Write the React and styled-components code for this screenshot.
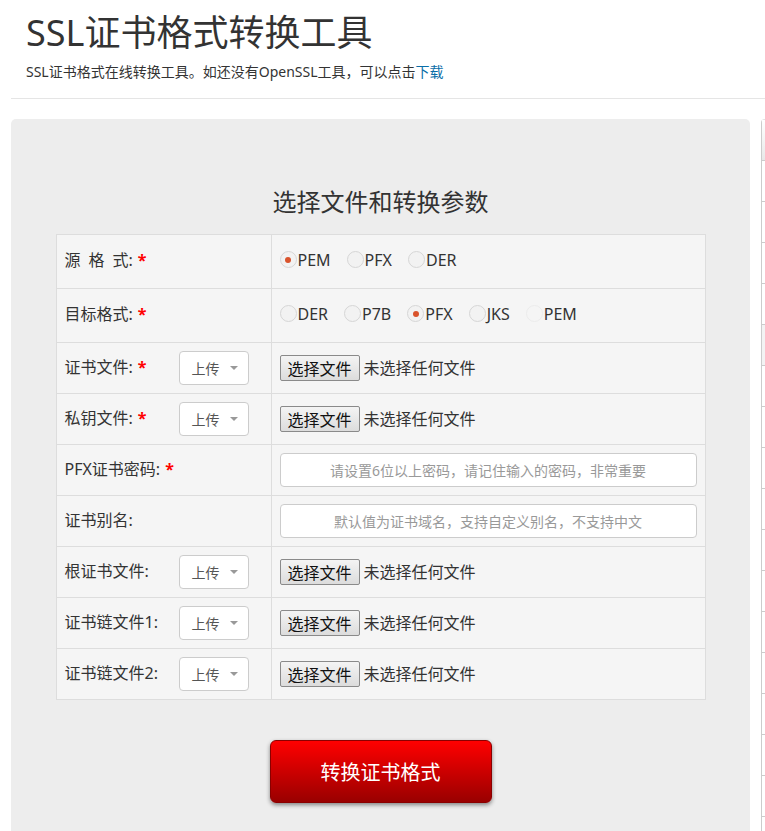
import React from "react";
import styled, { createGlobalStyle } from "styled-components";

const GlobalStyle = createGlobalStyle`
    html, body {
        margin: 0;
        padding: 0;
        background: #ffffff;
        overflow: hidden;
    }
    body {
        font-family: "Noto Sans", "Noto Sans CJK SC", sans-serif;
        color: #333;
    }
`

const rows = [
    { label: "源\u2002格\u2002式:", required: true, kind: "radio", options: ["PEM", "PFX", "DER"], checked: "PEM", tall: true },
    { label: "目标格式:", required: true, kind: "radio", options: ["DER", "P7B", "PFX", "JKS", "PEM"], checked: "PFX", faded: "PEM", tall: true },
    { label: "证书文件:", required: true, kind: "file", upload: true },
    { label: "私钥文件:", required: true, kind: "file", upload: true },
    { label: "PFX证书密码:", required: true, kind: "input", placeholder: "请设置6位以上密码，请记住输入的密码，非常重要" },
    { label: "证书别名:", kind: "input", placeholder: "默认值为证书域名，支持自定义别名，不支持中文" },
    { label: "根证书文件:", kind: "file", upload: true },
    { label: "证书链文件1:", kind: "file", upload: true },
    { label: "证书链文件2:", kind: "file", upload: true },
];

const sideRows = Array.from({ length: 16 });

function App() {
    return (
        <Page>
            <GlobalStyle />
            <Header>
                <Title>SSL证书格式转换工具</Title>
                <Subtitle>
                    SSL证书格式在线转换工具。如还没有OpenSSL工具，可以点击<Link>下载</Link>
                </Subtitle>
            </Header>
            <Body>
                <Panel>
                    <PanelTitle>选择文件和转换参数</PanelTitle>
                    <Table>
                        <tbody>
                            {rows.map((row) => (
                                <Row key={row.label} $tall={row.tall}>
                                    <LabelCell>
                                        <LabelWrap>
                                            <LabelText>
                                                {row.label}
                                                {row.required && <Star>*</Star>}
                                            </LabelText>
                                            {row.upload && (
                                                <Select>
                                                    上传<Caret />
                                                </Select>
                                            )}
                                        </LabelWrap>
                                    </LabelCell>
                                    <ValueCell>
                                        {row.kind === "radio" && (
                                            <Radios>
                                                {row.options.map((opt) => (
                                                    <RadioItem key={opt}>
                                                        <Circle $checked={row.checked === opt} $faded={row.faded === opt} />
                                                        {opt}
                                                    </RadioItem>
                                                ))}
                                            </Radios>
                                        )}
                                        {row.kind === "file" && (
                                            <FileLine>
                                                <FileButton>选择文件</FileButton>
                                                <FileText>未选择任何文件</FileText>
                                            </FileLine>
                                        )}
                                        {row.kind === "input" && <TextInput placeholder={row.placeholder} />}
                                    </ValueCell>
                                </Row>
                            ))}
                        </tbody>
                    </Table>
                    <Submit>转换证书格式</Submit>
                </Panel>
                <Sidebar>
                    <SideHead />
                    {sideRows.map((_, i) => (
                        <SideRow key={i} $active={i === 4} />
                    ))}
                </Sidebar>
            </Body>
        </Page>
    );
}

const Page = styled.div`
    width: 765px;
    height: 831px;
    overflow: hidden;
`
const Header = styled.div`
    margin-left: 11px;
    padding: 9px 0 16px 15px;
    border-bottom: 1px solid #e5e5e5;
`
const Title = styled.h1`
    margin: 0;
    font-size: 36px;
    font-weight: 400;
    line-height: 48px;
    color: #333;
`
const Subtitle = styled.div`
    margin-top: 5px;
    font-size: 14px;
    line-height: 20px;
    color: #333;
`
const Link = styled.a`
    color: #0a6ea8;
    text-decoration: none;
`
const Body = styled.div`
    display: flex;
    gap: 11px;
    padding: 20px 0 0 11px;
`
const Panel = styled.div`
    flex: 0 0 739px;
    height: 760px;
    background: #ededed;
    border-radius: 5px;
    display: flex;
    flex-direction: column;
    align-items: center;
`
const PanelTitle = styled.h2`
    margin: 65px 0 0;
    font-size: 24px;
    font-weight: 400;
    line-height: 36px;
    color: #333;
`
const Table = styled.table`
    margin-top: 14px;
    width: 650px;
    border-collapse: collapse;
    background: #f5f5f5;
`
const Row = styled.tr`
    height: ${(p) => (p.$tall ? "54px" : "51px")};
`
const LabelCell = styled.td`
    width: 215px;
    border: 1px solid #dddddd;
    padding: 0 8px;
    font-size: 16px;
    color: #333;
    box-sizing: border-box;
`
const LabelWrap = styled.div`
    display: grid;
    grid-template-columns: 114px 70px;
    align-items: center;
`
const LabelText = styled.span`
    padding-bottom: 5px;
`
const Star = styled.span`
    color: #ff0000;
    margin-left: 5px;
    font-weight: 700;
`
const Select = styled.div`
    box-sizing: border-box;
    height: 34px;
    background: #fff;
    border: 1px solid #ccc;
    border-radius: 4px;
    display: flex;
    align-items: center;
    padding-left: 12px;
    gap: 10px;
    font-size: 14px;
    color: #555;
`
const Caret = styled.span`
    width: 0;
    height: 0;
    border-left: 4px solid transparent;
    border-right: 4px solid transparent;
    border-top: 4px solid #999;
`
const ValueCell = styled.td`
    border: 1px solid #dddddd;
    padding: 0 8px;
    font-size: 16px;
    color: #333;
`
const Radios = styled.div`
    display: flex;
    align-items: center;
    gap: 16px;
    margin-top: -4px;
`
const RadioItem = styled.label`
    display: flex;
    align-items: center;
    font-size: 16px;
    color: #333;
`
const Circle = styled.span`
    box-sizing: border-box;
    width: 17px;
    height: 17px;
    border-radius: 50%;
    border: 1px solid ${(p) => (p.$faded ? "#ececec" : "#d6d6d6")};
    background: ${(p) => (p.$faded ? "#f5f5f5" : "#f2f2f2")};
    margin-right: 1px;
    display: flex;
    align-items: center;
    justify-content: center;
    &::after {
        content: "";
        display: ${(p) => (p.$checked ? "block" : "none")};
        width: 6px;
        height: 6px;
        border-radius: 50%;
        background: #d9532c;
    }
`
const FileLine = styled.div`
    display: flex;
    align-items: center;
    gap: 4px;
    font-size: 16px;
    color: #333;
    margin-top: -1px;
`
const FileText = styled.span`
    padding-bottom: 2px;
`
const FileButton = styled.button`
    box-sizing: border-box;
    width: 80px;
    height: 26px;
    padding: 0;
    font-family: inherit;
    font-size: 16px;
    color: #111;
    background: linear-gradient(#f4f4f4, #dcdcdc);
    border: 1px solid #8a8a8a;
    border-radius: 2px;
`
const TextInput = styled.input`
    box-sizing: border-box;
    width: 417px;
    height: 34px;
    display: block;
    border: 1px solid #ccc;
    border-radius: 4px;
    background: #fff;
    text-align: center;
    font-family: inherit;
    font-size: 14px;
    &::placeholder {
        color: #999;
    }
`
const Submit = styled.button`
    margin-top: 40px;
    width: 222px;
    height: 63px;
    border: 1px solid #8a0000;
    border-radius: 6px;
    background: linear-gradient(#ff0000, #990000);
    box-shadow: 0 2px 4px rgba(0, 0, 0, 0.45);
    color: #fff;
    font-family: inherit;
    font-size: 20px;
`
const Sidebar = styled.div`
    flex: 0 0 250px;
    border-left: 1px solid #cccccc;
    border-top: 1px solid #e0e0e0;
    border-radius: 4px 4px 0 0;
`
const SideHead = styled.div`
    height: 40px;
    background: linear-gradient(#ffffff, #e8e8e8);
    border-bottom: 1px solid #cccccc;
`
const SideRow = styled.div`
    height: 40px;
    background: ${(p) => (p.$active ? "#f3f3f3" : "#ffffff")};
    border-bottom: 1px solid #cccccc;
`

export default App;
